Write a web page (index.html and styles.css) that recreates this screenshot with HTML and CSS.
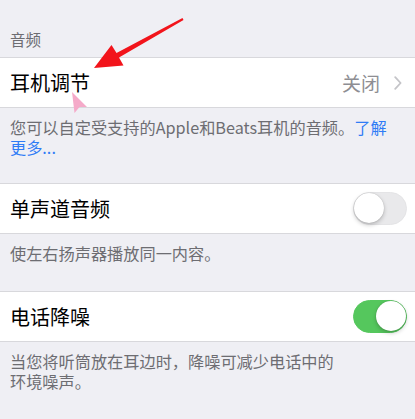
FILE: index.html
```html
<!DOCTYPE html>
<html lang="zh-CN">
<head>
<meta charset="utf-8">
<link rel="stylesheet" href="styles.css">
</head>
<body>
<div class="page">
  <div class="section-header">音频</div>
  <div class="row">
    <span class="title">耳机调节</span>
    <span class="detail">关闭<svg class="chevron" viewBox="0 0 8 14" width="8" height="14"><path d="M1.2 1.2 L6.6 7 L1.2 12.8" fill="none" stroke="#c4c4c8" stroke-width="1.8" stroke-linecap="round" stroke-linejoin="round"/></svg></span>
  </div>
  <div class="footer gap-lg">您可以自定受支持的Apple和Beats耳机的音频。<span class="link">了解<br>更多...</span></div>

  <div class="row">
    <span class="title">单声道音频</span>
    <span class="switch"><span class="knob"></span></span>
  </div>
  <div class="footer gap-md">使左右扬声器播放同一内容。</div>

  <div class="row">
    <span class="title">电话降噪</span>
    <span class="switch on"><span class="knob"></span></span>
  </div>
  <div class="footer">当您将听筒放在耳边时，降噪可减少电话中的<br>环境噪声。</div>

  <svg class="overlay" viewBox="0 0 415 419" width="415" height="419">
    <polygon points="94,68 123.5,65.5 119,57.5 183.5,19.9 182.5,18.1 116.5,53.1 111.5,45" fill="#f2141b"/>
    <polygon points="72,92 87,107 79.5,107 74.5,113" fill="#f5aac9"/>
  </svg>
</div>
</body>
</html>
```

FILE: styles.css
```css
html, body {
  margin: 0;
  padding: 0;
}
body {
  background: #efeff4;
  font-family: "Noto Sans CJK SC", "Noto Sans", sans-serif;
  width: 415px;
  height: 419px;
  overflow: hidden;
}
.page {
  position: relative;
  width: 415px;
  height: 419px;
}
.section-header {
  box-sizing: border-box;
  height: 57px;
  padding: 29px 10px 0;
  font-size: 15.5px;
  line-height: 20px;
  color: #6d6d72;
}
.row {
  box-sizing: border-box;
  height: 51px;
  background: #fff;
  border-top: 1px solid #d8d8dc;
  border-bottom: 1px solid #d8d8dc;
  display: flex;
  align-items: center;
  justify-content: space-between;
  padding: 0 8px 0 10px;
}
.title {
  font-size: 20px;
  line-height: 24px;
  color: #000;
}
.detail {
  display: flex;
  align-items: center;
  gap: 14px;
  font-size: 19px;
  line-height: 24px;
  color: #8e8e93;
  padding-right: 5px;
}
.chevron {
  display: block;
}
.footer {
  box-sizing: border-box;
  padding: 9px 10px 0;
  font-size: 16.2px;
  line-height: 20px;
  color: #6d6d72;
  white-space: nowrap;
}
.footer.gap-lg {
  height: 75px;
}
.footer.gap-md {
  height: 57px;
}
.link {
  color: #2f7cf6;
}
.switch {
  position: relative;
  box-sizing: border-box;
  width: 54px;
  height: 33px;
  border-radius: 17px;
  background: #e9e9eb;
  border: 1.5px solid #e4e4e6;
}
.switch .knob {
  position: absolute;
  top: 0;
  left: 0;
  width: 30px;
  height: 30px;
  border-radius: 50%;
  background: #fff;
  box-shadow: 0 2px 4px rgba(0,0,0,0.22), 0 0 1px rgba(0,0,0,0.25);
}
.switch.on {
  background: #55c75d;
  border-color: #55c75d;
}
.switch.on .knob {
  left: auto;
  right: 0;
}
.overlay {
  position: absolute;
  left: 0;
  top: 0;
  pointer-events: none;
}
```
